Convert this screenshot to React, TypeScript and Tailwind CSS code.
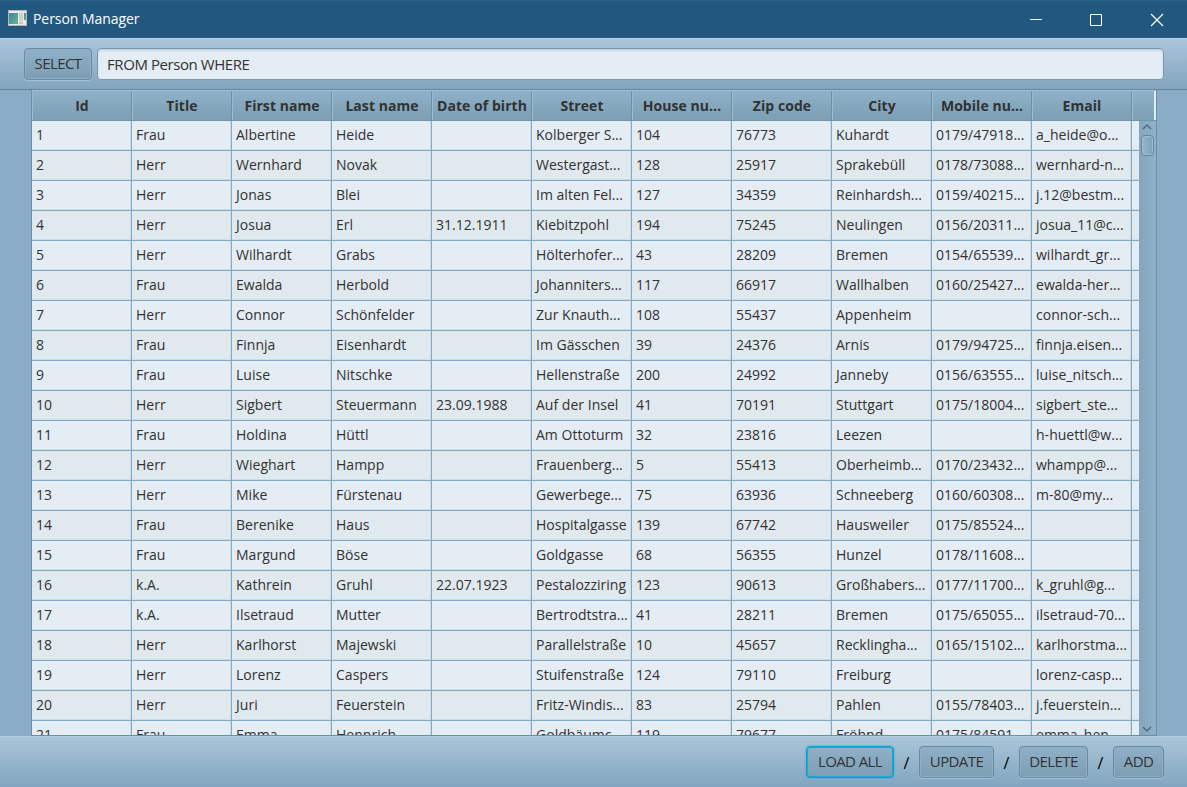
const columns = [
  "Id", "Title", "First name", "Last name", "Date of birth", "Street",
  "House nu...", "Zip code", "City", "Mobile nu...", "Email",
];

const people: string[][] = [
  ["1", "Frau", "Albertine", "Heide", "", "Kolberger S...", "104", "76773", "Kuhardt", "0179/47918...", "a_heide@o..."],
  ["2", "Herr", "Wernhard", "Novak", "", "Westergast...", "128", "25917", "Sprakebüll", "0178/73088...", "wernhard-n..."],
  ["3", "Herr", "Jonas", "Blei", "", "Im alten Fel...", "127", "34359", "Reinhardsh...", "0159/40215...", "j.12@bestm..."],
  ["4", "Herr", "Josua", "Erl", "31.12.1911", "Kiebitzpohl", "194", "75245", "Neulingen", "0156/20311...", "josua_11@c..."],
  ["5", "Herr", "Wilhardt", "Grabs", "", "Hölterhofer...", "43", "28209", "Bremen", "0154/65539...", "wilhardt_gr..."],
  ["6", "Frau", "Ewalda", "Herbold", "", "Johanniters...", "117", "66917", "Wallhalben", "0160/25427...", "ewalda-her..."],
  ["7", "Herr", "Connor", "Schönfelder", "", "Zur Knauth...", "108", "55437", "Appenheim", "", "connor-sch..."],
  ["8", "Frau", "Finnja", "Eisenhardt", "", "Im Gässchen", "39", "24376", "Arnis", "0179/94725...", "finnja.eisen..."],
  ["9", "Frau", "Luise", "Nitschke", "", "Hellenstraße", "200", "24992", "Janneby", "0156/63555...", "luise_nitsch..."],
  ["10", "Herr", "Sigbert", "Steuermann", "23.09.1988", "Auf der Insel", "41", "70191", "Stuttgart", "0175/18004...", "sigbert_ste..."],
  ["11", "Frau", "Holdina", "Hüttl", "", "Am Ottoturm", "32", "23816", "Leezen", "", "h-huettl@w..."],
  ["12", "Herr", "Wieghart", "Hampp", "", "Frauenberg...", "5", "55413", "Oberheimb...", "0170/23432...", "whampp@..."],
  ["13", "Herr", "Mike", "Fürstenau", "", "Gewerbege...", "75", "63936", "Schneeberg", "0160/60308...", "m-80@my..."],
  ["14", "Frau", "Berenike", "Haus", "", "Hospitalgasse", "139", "67742", "Hausweiler", "0175/85524...", ""],
  ["15", "Frau", "Margund", "Böse", "", "Goldgasse", "68", "56355", "Hunzel", "0178/11608...", ""],
  ["16", "k.A.", "Kathrein", "Gruhl", "22.07.1923", "Pestalozziring", "123", "90613", "Großhabers...", "0177/11700...", "k_gruhl@g..."],
  ["17", "k.A.", "Ilsetraud", "Mutter", "", "Bertrodtstra...", "41", "28211", "Bremen", "0175/65055...", "ilsetraud-70..."],
  ["18", "Herr", "Karlhorst", "Majewski", "", "Parallelstraße", "10", "45657", "Recklingha...", "0165/15102...", "karlhorstma..."],
  ["19", "Herr", "Lorenz", "Caspers", "", "Stuifenstraße", "124", "79110", "Freiburg", "", "lorenz-casp..."],
  ["20", "Herr", "Juri", "Feuerstein", "", "Fritz-Windis...", "83", "25794", "Pahlen", "0155/78403...", "j.feuerstein..."],
  ["21", "Frau", "Emma", "Hennrich", "", "Goldbäumc...", "119", "79677", "Fröhnd", "0175/84591...", "emma_hen..."],
];

function Button({ label, width, focused = false }: { label: string; width: string; focused?: boolean }) {
  const look = focused
    ? "border-[#039ed3] shadow-[inset_0_0_0_1px_#2ba6d2,0_0_2px_#3aaad6]"
    : "border-[#69899f] shadow-[inset_0_0_0_1px_#8fb0c6,0_1px_0_#a5c2d4]";
  return (
    <button
      className={`${width} ${look} h-8 shrink-0 rounded-[4px] border bg-linear-to-b from-[#8fb0c7] to-[#7c9eb5] pb-px text-center text-[15px] leading-none tracking-[-0.6px] whitespace-nowrap`}
    >
      {label}
    </button>
  );
}

function Separator() {
  return <span className="w-[25px] pt-[5px] text-center text-[16px] text-black">/</span>;
}

function AppIcon() {
  return (
    <svg width="19" height="16" viewBox="0 0 19 16" shapeRendering="crispEdges">
      <defs>
        <linearGradient id="pane" x1="0" y1="0" x2="1" y2="1">
          <stop offset="0" stopColor="#3e83a5" />
          <stop offset="1" stopColor="#63b987" />
        </linearGradient>
      </defs>
      <rect width="19" height="16" fill="#b9b5b3" />
      <rect x="1" y="1" width="17" height="14" fill="#ece9e8" />
      <rect x="1" y="3" width="9" height="11" fill="url(#pane)" />
      <rect x="11" y="3" width="4" height="8" fill="#d0cfce" />
      <rect x="11" y="12" width="4" height="2" fill="#c4c4c4" />
      <rect x="16" y="3" width="2" height="7" fill="url(#pane)" />
    </svg>
  );
}

function TitleBar() {
  return (
    <header className="flex h-[38px] shrink-0 items-center border-t border-[#2c6188] bg-[#22587f] pl-2 text-white">
      <div className="pb-[3px]"><AppIcon /></div>
      <h1 className="grow pb-[2px] pl-[6px] text-[14px] tracking-[-0.05px]">Person Manager</h1>
      <svg className="mr-[23px]" width="134" height="14" viewBox="0 0 134 14" fill="none" stroke="white">
        <path d="M0 6.5H12" />
        <path d="M60.5 1.5h11v11h-11z" />
        <path d="M121 1l12 12M133 1l-12 12" strokeWidth="1.2" />
      </svg>
    </header>
  );
}

function ScrollBar() {
  return (
    <div className="flex w-[17px] shrink-0 flex-col items-center bg-linear-to-r from-[#83a5bf] to-[#8fb0c8] pr-px">
      <svg className="mt-[3px] shrink-0" width="10" height="6" viewBox="0 0 10 6" fill="none" stroke="#4e6a7d" strokeWidth="1.4">
        <path d="M1 5l4-4 4 4" />
      </svg>
      <div className="mt-[5px] h-[21px] w-[13px] shrink-0 rounded-[4px] border border-[#66889e] bg-linear-to-r from-[#94b7cf] to-[#7fa2ba] shadow-[inset_0_0_0_1px_#9dbdd2]" />
      <svg className="mt-auto mb-[3px] shrink-0" width="10" height="6" viewBox="0 0 10 6" fill="none" stroke="#4e6a7d" strokeWidth="1.4">
        <path d="M1 1l4 4 4-4" />
      </svg>
    </div>
  );
}

function PersonTable() {
  return (
    <section className="mr-[30px] ml-[31px] flex min-h-0 grow flex-col border border-t-0 border-[#6c8ea6] text-[14px] tracking-[0.02px]">
      <div className="flex h-[31px] shrink-0 border-y border-t-[#a4c0d3] border-b-[#7195ad] bg-linear-to-b from-[#8fb1c9] to-[#7b9fb5]">
        {columns.map((name) => (
          <div key={name} className="flex w-[100px] shrink-0 items-center justify-center border-r border-l border-r-[#6f91a7] border-l-[#9dbace] text-[14px] font-bold tracking-[0.05px] whitespace-nowrap">
            {name}
          </div>
        ))}
        <div className="grow border-r-2 border-l border-r-[#e3ecf4] border-l-[#9dbace]" />
      </div>
      <div className="flex min-h-0 grow">
        <div className="min-w-0 grow overflow-hidden">
          {people.map((person, row) => (
            <div key={person[0]} className={`flex h-[30px] border-b border-[#83a9c4] ${row % 2 ? "bg-[#e0e9ee]" : "bg-[#e4ecf4]"}`}>
              {person.map((value, index) => (
                <div key={index} className="w-[100px] shrink-0 border-r border-[#83a9c4] pl-1 leading-[28px] whitespace-nowrap shadow-[inset_-1px_-1px_0_#cddde8]">
                  {value}
                </div>
              ))}
              <div className="grow shadow-[inset_0_-1px_0_#cddde8]" />
            </div>
          ))}
        </div>
        <ScrollBar />
      </div>
    </section>
  );
}

export default function App() {
  return (
    <main className="flex h-[787px] w-[1187px] flex-col overflow-hidden bg-[#8aacc7] font-['Open_Sans','Noto_Sans',sans-serif] text-[14px] text-[#323232]">
      <TitleBar />
      <div className="flex h-[52px] shrink-0 gap-[5px] border-t border-b border-t-[#bfd3e0] border-b-[#63859b] bg-linear-to-b from-[#a9c5d9] to-[#83a5bf] pt-[9px] pr-[23px] pl-6">
        <Button label="SELECT" width="w-[68px]" />
        <input
          className="h-8 min-w-0 grow rounded-[4px] border border-[#7b99ae] bg-[#e4ecf4] px-[9px] text-[15px] tracking-[-0.43px] shadow-[inset_0_2px_2px_#c6d3dc] outline-none"
          defaultValue="FROM Person WHERE"
        />
      </div>
      <PersonTable />
      <footer className="flex h-[51px] shrink-0 justify-end border-t border-[#b8cedd] bg-linear-to-b from-[#a9c5d9] to-[#83a5bf] pt-[9px] pr-[23px]">
        <Button label="LOAD ALL" width="w-[88px]" focused />
        <Separator />
        <Button label="UPDATE" width="w-[75px]" />
        <Separator />
        <Button label="DELETE" width="w-[69px]" />
        <Separator />
        <Button label="ADD" width="w-[51px]" />
      </footer>
    </main>
  );
}
